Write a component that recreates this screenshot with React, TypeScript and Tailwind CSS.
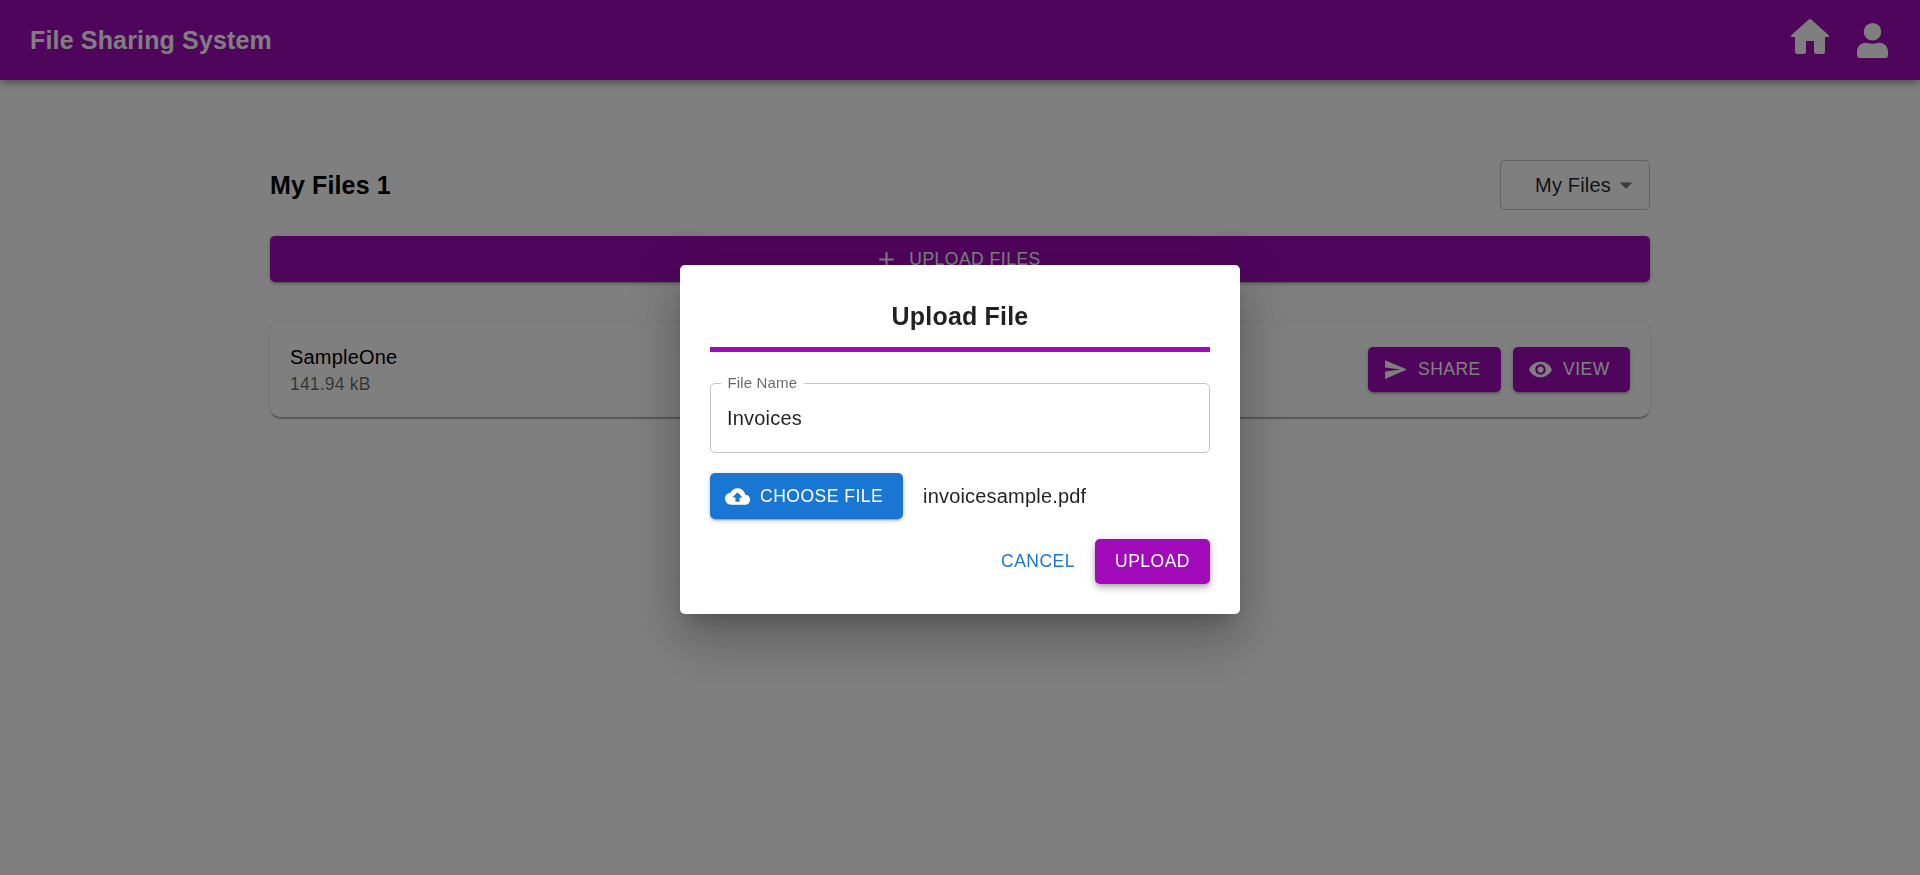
import React from "react";

const buttonShadow =
  "shadow-[0px_4px_1px_-3px_rgba(0,0,0,0.2),0px_2px_3px_0px_rgba(0,0,0,0.14),0px_1px_6px_0px_rgba(0,0,0,0.12)]";
const buttonBase =
  "flex items-center rounded-[5px] text-[17.5px] leading-[30.6px] tracking-[0.5px] uppercase whitespace-nowrap";

function Icon({ d, className }: { d: string; className: string }) {
  return (
    <svg viewBox="0 0 24 24" fill="currentColor" className={className} aria-hidden="true">
      <path d={d} />
    </svg>
  );
}

const icons = {
  add: "M19 13h-6v6h-2v-6H5v-2h6V5h2v6h6v2z",
  send: "M2.01 21 23 12 2.01 3 2 10l15 2-15 2z",
  eye: "M12 4.5C7 4.5 2.73 7.61 1 12c1.73 4.39 6 7.5 11 7.5s9.27-3.11 11-7.5c-1.73-4.39-6-7.5-11-7.5M12 17c-2.76 0-5-2.24-5-5s2.24-5 5-5 5 2.24 5 5-2.24 5-5 5m0-8c-1.66 0-3 1.34-3 3s1.34 3 3 3 3-1.34 3-3-1.34-3-3-3",
  cloud: "M19.35 10.04C18.67 6.59 15.64 4 12 4 9.11 4 6.6 5.64 5.35 8.04 2.34 8.36 0 10.91 0 14c0 3.31 2.69 6 6 6h13c2.76 0 5-2.24 5-5 0-2.64-2.05-4.78-4.65-4.96M14 13v4h-4v-4H7l5-5 5 5z",
  caret: "M7 10l5 5 5-5z",
};

function Header() {
  return (
    <header className="flex h-20 items-center justify-between bg-[#a00ab8] pr-[31px] pl-[30px] text-white shadow-[0px_2px_5px_-1px_rgba(0,0,0,0.2),0px_5px_6px_0px_rgba(0,0,0,0.14),0px_1px_12px_0px_rgba(0,0,0,0.12)]">
      <h1 className="text-[25px] leading-10 font-bold tracking-[0.16px]">File Sharing System</h1>
      <nav className="flex items-start gap-[26px] self-start pt-[18px]">
        <svg viewBox="0 0 40 38" fill="currentColor" className="h-[38px] w-10" aria-label="Home">
          <path d="M18.800 1.500Q20 .5 21.200 1.500L38.800 17.200Q39.300 18.200 38.600 19H35V33.500Q35 36 32.500 36H26.500Q24 36 24 33.500V23H16V33.500Q16 36 13.500 36H7.500Q5 36 5 33.500V19H1.400Q.7 18.200 1.200 17.200Z" />
        </svg>
        <svg viewBox="0 0 33 36" fill="currentColor" className="mt-1 h-9 w-[33px]" aria-label="Account">
          <circle cx="16.500" cy="9.700" r="8.800" />
          <path d="M10 20.700C12 20.700 13 21.700 16.500 21.700S21 20.700 23 20.700C28.200 20.700 32 24.600 32 30V33Q32 36 29 36H4Q1 36 1 33V30C1 24.600 4.800 20.700 10 20.700Z" />
        </svg>
      </nav>
    </header>
  );
}

function UploadDialog() {
  return (
    <div className="fixed inset-0 flex items-start justify-center bg-black/50 pt-[265px]">
      <section
        role="dialog"
        className="flex h-[349px] w-[560px] flex-col rounded-[5px] bg-white px-[30px] pt-[30px] text-black/87 shadow-[0px_14px_19px_-9px_rgba(0,0,0,0.2),0px_30px_48px_4px_rgba(0,0,0,0.14),0px_11px_58px_10px_rgba(0,0,0,0.12)]"
      >
        <h2 className="h-[57px] border-b-5 border-[#a00ab8] pt-px text-center text-[25px] leading-10 font-bold tracking-[0.19px]">
          Upload File
        </h2>
        <fieldset className="mt-[22px] h-[79px] rounded-[5px] border border-black/23 pl-[10px]">
          <legend className="h-[18px] px-[6.5px] text-[15px] leading-[18px] tracking-[0.14px] text-black/60">File Name</legend>
          <input
            aria-label="File Name"
            defaultValue="Invoices"
            className="mt-[11px] ml-[6px] block h-[29px] w-[440px] text-[20px] tracking-[0.19px] outline-none"
          />
        </fieldset>
        <div className="mt-5 flex items-center gap-5">
          <button className={`${buttonBase} ${buttonShadow} h-[46px] w-[193px] bg-[#1976d2] pl-[15px] text-white`}>
            <Icon d={icons.cloud} className="mr-[10px] size-[25px]" />
            Choose File
          </button>
          <span className="text-[20px] leading-[30px] tracking-[0.19px]">invoicesample.pdf</span>
        </div>
        <div className="mt-5 flex justify-end">
          <button className={`${buttonBase} h-[45px] px-[20px] text-[#1976d2]`}>Cancel</button>
          <button
            className={`${buttonBase} h-[45px] w-[115px] justify-center bg-[#a00ab8] text-white shadow-[0px_2px_5px_-1px_rgba(0,0,0,0.2),0px_5px_6px_0px_rgba(0,0,0,0.14),0px_1px_12px_0px_rgba(0,0,0,0.12)]`}
          >
            Upload
          </button>
        </div>
      </section>
    </div>
  );
}

export default function App() {
  return (
    <div className="h-[875px] overflow-hidden bg-white font-['Liberation_Sans',Arial,sans-serif]">
      <Header />
      <main className="mx-auto w-[1380px] pt-20">
        <div className="flex h-[50px] items-center justify-between">
          <h2 className="text-[25px] leading-10 font-bold tracking-[0.13px]">My Files 1</h2>
          <div className="flex h-[50px] w-[150px] items-center justify-end rounded-[5px] border border-black/23 pr-[8px] text-[20px] tracking-[0.19px] text-black/87">
            My Files
            <Icon d={icons.caret} className="size-[30px] text-black/54" />
          </div>
        </div>
        <button className={`${buttonBase} ${buttonShadow} mt-[26px] h-[46px] w-full justify-center bg-[#a00ab8] text-white`}>
          <Icon d={icons.add} className="mr-[10px] -ml-[5px] size-[25px]" />
          Upload Files
        </button>
        <article className="mt-10 flex h-[95px] items-center justify-between rounded-[10px] bg-white px-5 shadow-[0px_3px_1px_-1px_rgba(0,0,0,0.2),0px_1px_1px_0px_rgba(0,0,0,0.14),0px_1px_4px_0px_rgba(0,0,0,0.12)]">
          <div>
            <p className="text-[20px] leading-[30px] tracking-[0.19px]">SampleOne</p>
            <p className="text-[17.5px] leading-[25px] tracking-[0.19px] text-black/60">141.94 kB</p>
          </div>
          <div className="flex gap-3">
            <button className={`${buttonBase} ${buttonShadow} h-[45px] w-[133px] bg-[#a00ab8] pl-[15px] text-white`}>
              <Icon d={icons.send} className="mr-[10px] size-[25px]" />
              Share
            </button>
            <button className={`${buttonBase} ${buttonShadow} h-[45px] w-[117px] bg-[#a00ab8] pl-[15px] text-white`}>
              <Icon d={icons.eye} className="mr-[10px] size-[25px]" />
              View
            </button>
          </div>
        </article>
      </main>
      <UploadDialog />
    </div>
  );
}
